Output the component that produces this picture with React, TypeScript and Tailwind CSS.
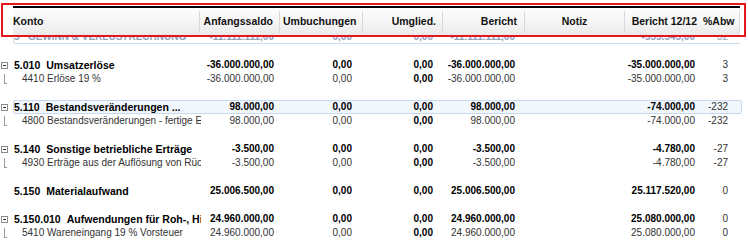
import React from "react";

type Row =
  | { kind: "blank" }
  | {
      kind: "group" | "child";
      code: string;
      name: string;
      vals: string[];
      expand?: boolean;
      active?: boolean;
    };

const rows: Row[] = [
  { kind: "blank" },
  {
    kind: "group",
    code: "5.010",
    name: "Umsatzerlöse",
    vals: ["-36.000.000,00", "0,00", "0,00", "-36.000.000,00", "", "-35.000.000,00", "3"],
    expand: true,
  },
  {
    kind: "child",
    code: "4410",
    name: "Erlöse 19 %",
    vals: ["-36.000.000,00", "0,00", "0,00", "-36.000.000,00", "", "-35.000.000,00", "3"],
  },
  { kind: "blank" },
  {
    kind: "group",
    code: "5.110",
    name: "Bestandsveränderungen ...",
    vals: ["98.000,00", "0,00", "0,00", "98.000,00", "", "-74.000,00", "-232"],
    expand: true,
    active: true,
  },
  {
    kind: "child",
    code: "4800",
    name: "Bestandsveränderungen - fertige Erzeugnisse",
    vals: ["98.000,00", "0,00", "0,00", "98.000,00", "", "-74.000,00", "-232"],
  },
  { kind: "blank" },
  {
    kind: "group",
    code: "5.140",
    name: "Sonstige betriebliche Erträge",
    vals: ["-3.500,00", "0,00", "0,00", "-3.500,00", "", "-4.780,00", "-27"],
    expand: true,
  },
  {
    kind: "child",
    code: "4930",
    name: "Erträge aus der Auflösung von Rückstellungen",
    vals: ["-3.500,00", "0,00", "0,00", "-3.500,00", "", "-4.780,00", "-27"],
  },
  { kind: "blank" },
  {
    kind: "group",
    code: "5.150",
    name: "Materialaufwand",
    vals: ["25.006.500,00", "0,00", "0,00", "25.006.500,00", "", "25.117.520,00", "0"],
  },
  { kind: "blank" },
  {
    kind: "group",
    code: "5.150.010",
    name: "Aufwendungen für Roh-, Hilfs- und Betriebsstoffe",
    vals: ["24.960.000,00", "0,00", "0,00", "24.960.000,00", "", "25.080.000,00", "0"],
    expand: true,
  },
  {
    kind: "child",
    code: "5410",
    name: "Wareneingang 19 % Vorsteuer",
    vals: ["24.960.000,00", "0,00", "0,00", "24.960.000,00", "", "25.080.000,00", "0"],
  },
];

// right padding of each value column
const valPad = ["pr-[7px]", "pr-[12px]", "pr-[11px]", "pr-[11px]", "pr-0", "pr-[6px]", "pr-[13px]"];

const grid = "grid grid-cols-[187px_80px_83px_80px_82px_100px_75px_40px]";

const Expander = () => (
  <svg width="7" height="7" viewBox="0 0 7 7" className="mt-[4px] ml-[1px]">
    <rect x="0.5" y="0.5" width="6" height="6" fill="#fff" stroke="#8c8c8c" />
    <line x1="2" y1="3.5" x2="5" y2="3.5" stroke="#333" />
  </svg>
);

const Connector = () => (
  <div className="ml-[4px] mt-[2px] h-[10px] w-[3px] border-l border-b border-[#9a9a9a]" />
);

const DataRow = ({ row }: { row: Row }) => {
  if (row.kind === "blank") return <div className="h-[14px]" />;
  const group = row.kind === "group";
  return (
    <div className="flex h-[14px]">
      <div className="w-[13px] shrink-0">
        {group && row.expand && <Expander />}
        {!group && <Connector />}
      </div>
      <div
        className={`${grid} h-[14px] items-center rounded-[2px] border leading-[12px] ${
          row.active ? "border-[#c6d9f0] bg-[#f2f7fd]" : "border-transparent"
        }`}
      >
        <div
          className={`overflow-hidden whitespace-nowrap pr-[3px] ${
            group ? "font-bold text-[10.5px] text-black" : "pl-[8px] text-[#333]"
          }`}
        >
          {group ? (
            <span className="flex gap-[6px]">
              <span>{row.code}</span>
              <span>{row.name}</span>
            </span>
          ) : (
            <span>
              {row.code} {row.name}
            </span>
          )}
        </div>
        {row.vals.map((v, i) => (
          <div
            key={i}
            className={`text-right whitespace-nowrap ${valPad[i]} ${
              (group && i < 6) || i === 2 ? "font-bold text-black" : "text-[#333]"
            }`}
          >
            {v}
          </div>
        ))}
      </div>
    </div>
  );
};

const headers = [
  { t: "Konto", c: "justify-start pl-0" },
  { t: "Anfangssaldo", c: "justify-end pr-[6px]" },
  { t: "Umbuchungen", c: "justify-start pl-[3px]" },
  { t: "Umglied.", c: "justify-end pr-[6px]" },
  { t: "Bericht", c: "justify-end pr-[7px]" },
  { t: "Notiz", c: "justify-center" },
  { t: "Bericht 12/12", c: "justify-end pr-[3px]" },
  { t: "%Abw", c: "justify-start pl-[3px]" },
];

export default function App() {
  return (
    <div className="relative h-[243px] w-[748px] overflow-hidden bg-white font-['Liberation_Sans',Arial,sans-serif] text-[10px]">
      <div className="pt-[6px]">
        {/* header */}
        <div className="ml-[13px] w-[727px] border-t-2 border-black">
          <div className={`${grid} h-[28px] bg-gradient-to-b from-[#fdfdfd] via-[#f6f6f6] to-[#e9e9e9]`}>
            {headers.map((h, i) => (
              <div
                key={i}
                className={`my-[3px] flex items-center whitespace-nowrap font-bold text-[10.5px] text-[#111] ${h.c} ${
                  i < 6 || i === 7 ? "border-r border-[#dadada]" : ""
                }`}
              >
                {h.t}
              </div>
            ))}
          </div>
        </div>

        {/* partially scrolled-out row */}
        <div className="ml-[13px] flex h-[8px] w-[727px] items-end overflow-hidden">
          <div
            className={`${grid} h-[14px] shrink-0 items-center rounded-[2px] border border-[#cddcee] font-bold leading-[12px] text-[#8ea2bd]`}
          >
            <div className="whitespace-nowrap">5&nbsp;&nbsp;&nbsp;GEWINN &amp; VERLUSTRECHNUNG</div>
            <div className="pr-[7px] text-right">-11.111.111,00</div>
            <div className="pr-[12px] text-right">0,00</div>
            <div className="pr-[11px] text-right">0,00</div>
            <div className="pr-[11px] text-right">-11.111.111,00</div>
            <div />
            <div className="pr-[6px] text-right">-555.545,00</div>
            <div className="pr-[13px] text-right font-normal">32</div>
          </div>
        </div>

        {rows.map((r, i) => (
          <DataRow key={i} row={r} />
        ))}
      </div>

      {/* red annotation frame */}
      <div className="pointer-events-none absolute left-[1px] top-[3px] h-[34px] w-[745px] border-2 border-[#e3171e]" />
    </div>
  );
}
